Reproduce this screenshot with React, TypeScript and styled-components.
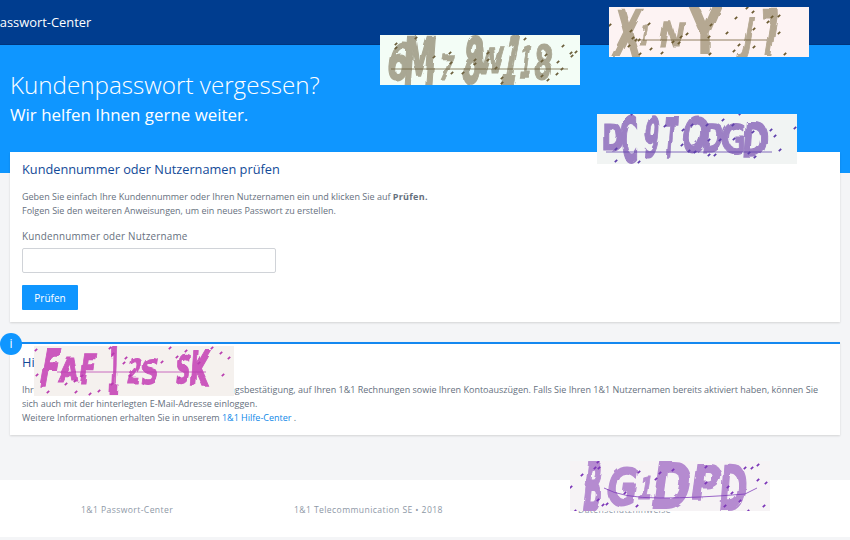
import React from "react";
import styled, { createGlobalStyle } from "styled-components";

const Global = createGlobalStyle`
  html, body { margin: 0; padding: 0; background: #f4f5f7; overflow: hidden; }
  body { font-family: "Open Sans", "Noto Sans", sans-serif; color: #5f6b7a; }
`;

const Page = styled.div`
  position: relative;
  width: 850px;
  height: 540px;
  overflow: hidden;
`;

const TopBar = styled.header`
  height: 44px;
  background: #003d8f;
  border-bottom: 1px solid #00357d;
  display: flex;
  align-items: center;
`;

const Brand = styled.div`
  margin-left: -8px;
  margin-top: -1px;
  color: #fff;
  font-size: 12.9px;
`;

const Hero = styled.section`
  height: 128px;
  background: #0f96ff;
  padding: 22px 10px 0;
  box-sizing: border-box;
  color: #fff;
`;

const HeroTitle = styled.h1`
  margin: 0;
  font-size: 24.2px;
  line-height: 36px;
  font-weight: 300;
`;

const HeroSub = styled.h2`
  margin: 0;
  font-size: 16.9px;
  line-height: 24px;
  font-weight: 400;
`;

const Main = styled.main`
  margin-top: -21px;
  padding: 0 10px;
  display: flex;
  flex-direction: column;
  gap: 20px;
`;

const Card = styled.section<{ $accent?: boolean }>`
  position: relative;
  background: #fff;
  padding: 8px 12px 0;
  box-sizing: border-box;
  height: ${(p) => (p.$accent ? "93px" : "170px")};
  border-top: ${(p) => (p.$accent ? "2px solid #1488f0" : "none")};
  box-shadow: 0 1px 2px rgba(0, 0, 0, 0.14);
`;

const CardTitle = styled.h3`
  margin: 0;
  font-size: 12.75px;
  line-height: 18px;
  font-weight: 400;
  color: #124a98;
`;

const Copy = styled.p`
  margin: 12px 0 0;
  font-size: 9px;
  line-height: 14px;
  color: #66707e;
  strong { font-weight: 700; letter-spacing: 0.3px; }
  a { color: #0f88e8; text-decoration: none; }
`;

const Label = styled.label`
  display: block;
  margin-top: 11px;
  font-size: 9.9px;
  line-height: 14px;
  letter-spacing: 0.2px;
  color: #66707e;
`;

const Input = styled.input`
  display: block;
  width: 254px;
  height: 25px;
  margin-top: 5px;
  box-sizing: border-box;
  background: #fff;
  border: 1px solid #d0d3d8;
  border-radius: 2px;
`;

const Submit = styled.button`
  display: block;
  width: 56px;
  height: 25px;
  margin-top: 12px;
  padding: 0;
  border: 0;
  border-radius: 1px;
  background: #0f96ff;
  color: #fff;
  font-family: inherit;
  font-size: 10px;
`;

const InfoBadge = styled.div`
  position: absolute;
  left: -10px;
  top: -11px;
  width: 22px;
  height: 22px;
  border-radius: 50%;
  background: #0f96ff;
  color: #fff;
  font-size: 12px;
  font-weight: 400;
  line-height: 22px;
  text-align: center;
`;

const InfoTitle = styled(CardTitle)`
  margin-top: 1px;
`;

const InfoCopy = styled(Copy)`
  margin-top: 12px;
`;

const Footer = styled.footer`
  margin-top: 45px;
  height: 57px;
  background: #fff;
  display: flex;
  align-items: center;
  padding-top: 2px;
  box-sizing: border-box;
  font-size: 8.6px;
  letter-spacing: 0.4px;
  color: #8e98a6;
`;

const FootItem = styled.span<{ $w: number }>`
  flex: none;
  width: ${(p) => p.$w}px;
  &:first-child { padding-left: 81px; box-sizing: border-box; }
`;

const CaptchaBox = styled.svg<{ $x: number; $y: number; $bg: string }>`
  position: absolute;
  left: ${(p) => p.$x}px;
  top: ${(p) => p.$y}px;
  width: 200px;
  height: 50px;
  background: ${(p) => p.$bg};
`;

// char, left, top, bottom, width, skew
type Glyph = [string, number, number, number, number, number];

interface CaptchaProps {
  id: string;
  x: number;
  y: number;
  bg: string;
  ink: string;
  dot: string;
  glyphs: Glyph[];
  line: string;
  dots: [number, number][];
}

const Captcha = ({ id, x, y, bg, ink, dot, glyphs, line, dots }: CaptchaProps) => (
  <CaptchaBox $x={x} $y={y} $bg={bg} viewBox="0 0 200 50">
    <defs>
      <filter id={id} x="-10%" y="-10%" width="120%" height="120%">
        <feTurbulence type="fractalNoise" baseFrequency="0.06" numOctaves="2" seed="4" result="n" />
        <feDisplacementMap in="SourceGraphic" in2="n" scale="5" />
        <feGaussianBlur stdDeviation="0.7" />
      </filter>
    </defs>
    <g filter={`url(#${id})`} fill={ink} stroke={ink} strokeWidth="1.2" fontFamily="'DejaVu Sans', sans-serif" fontWeight="700" fontSize="40" textAnchor="middle">
      {glyphs.map(([c, left, top, bottom, w, skew], i) => (
        <text
          key={i}
          transform={`translate(${left + w / 2} ${bottom}) skewX(${skew}) scale(${w / 28} ${(bottom - top) / 29})`}
        >
          {c}
        </text>
      ))}
    </g>
    <path d={line} fill="none" stroke={dot} strokeOpacity="0.75" strokeWidth="1" />
    <g stroke={dot} strokeWidth="1.7" strokeLinecap="butt">
      {dots.map(([dx, dy], i) => (
        <path key={i} d={`M${dx - 1.2} ${dy + 1.2}L${dx + 1.2} ${dy - 1.2}`} />
      ))}
    </g>
  </CaptchaBox>
);

const App = () => {
  return (
    <Page>
      <Global />
      <TopBar>
        <Brand>Passwort-Center</Brand>
      </TopBar>
      <Hero>
        <HeroTitle>Kundenpasswort vergessen?</HeroTitle>
        <HeroSub>Wir helfen Ihnen gerne weiter.</HeroSub>
      </Hero>
      <Main>
        <Card>
          <CardTitle>Kundennummer oder Nutzernamen prüfen</CardTitle>
          <Copy>
            Geben Sie einfach Ihre Kundennummer oder Ihren Nutzernamen ein und klicken Sie auf <strong>Prüfen.</strong>
            <br />
            Folgen Sie den weiteren Anweisungen, um ein neues Passwort zu erstellen.
          </Copy>
          <Label htmlFor="kunde">Kundennummer oder Nutzername</Label>
          <Input id="kunde" />
          <Submit>Prüfen</Submit>
        </Card>
        <Card $accent>
          <InfoBadge>i</InfoBadge>
          <InfoTitle>Hinweis</InfoTitle>
          <InfoCopy>
            Ihre Kundennummer finden Sie z. B. in Ihrer Auftragsbestätigung, auf Ihren 1&amp;1 Rechnungen sowie Ihren Kontoauszügen. Falls Sie Ihren 1&amp;1 Nutzernamen bereits aktiviert haben, können Sie sich auch mit der hinterlegten E-Mail-Adresse einloggen.
            <br />
            Weitere Informationen erhalten Sie in unserem <a href="#hilfe">1&amp;1 Hilfe-Center</a> .
          </InfoCopy>
        </Card>
      </Main>
      <Footer>
        <FootItem $w={294}>1&amp;1 Passwort-Center</FootItem>
        <FootItem $w={284}>1&amp;1 Telecommunication SE • 2018</FootItem>
        <FootItem $w={200}>Datenschutzhinweise</FootItem>
      </Footer>

      <Captcha
        id="c1" x={380} y={35} bg="#f3fdf6" ink="#a9a793" dot="#6b5f3c"
        glyphs={[["6", 5, 8, 44, 22, -8], ["M", 26, 2, 50, 24, -4], ["7", 58, 20, 45, 14, -10], ["8", 81, 2, 48, 19, -6], ["W", 99, 12, 38, 19, -6], ["1", 120, 0, 50, 15, -10], ["1", 137, 10, 42, 13, -8], ["8", 154, 10, 45, 18, -2]]}
        line="M11 34H188"
        dots={[[36, -1], [36, 3], [16, 9], [16, 13], [54, 22], [70, 18], [71, 28], [72, 38], [83, 38], [95, 25], [95, 29], [108, 18], [108, 25], [116, 33], [122, 43], [122, 48], [145, 4], [162, 26], [166, 20], [178, 27], [162, 41], [168, 45], [177, 39], [182, 34], [183, 11], [191, 18], [196, 17], [192, 21]]}
      />
      <Captcha
        id="c2" x={609} y={7} bg="#fdf3f3" ink="#b5a892" dot="#6b5a30"
        glyphs={[["X", 4, 3, 48, 25, -6], ["1", 29, 18, 38, 10, -10], ["N", 50, 15, 40, 22, -10], ["Y", 81, 0, 46, 30, 0], ["J", 127, 10, 45, 18, -10], ["7", 153, 2, 48, 19, 2]]}
        line="M30 33H158"
        dots={[[1, 18], [22, 24], [20, 39], [27, 33], [30, 33], [40, 17], [24, 31], [31, 47], [42, 42], [53, 46], [64, 35], [70, 36], [72, 30], [78, 27], [102, 18], [100, 30], [101, 47], [118, 26], [127, 11], [138, 1], [144, 5], [145, 22], [130, 38], [145, 40], [125, 44], [159, 15], [163, 10], [170, 9], [170, 26], [176, 47]]}
      />
      <Captcha
        id="c3" x={597} y={114} bg="#f1f4f3" ink="#9c80c4" dot="#5e3eab"
        glyphs={[["D", 6, 9, 36, 19, 0], ["C", 24, 3, 48, 17, 0], ["9", 45, 3, 43, 16, -6], ["T", 65, 3, 44, 14, -4], ["O", 85, 3, 38, 21, -8], ["D", 105, 9, 38, 19, -6], ["G", 126, 9, 39, 21, 0], ["D", 146, 8, 43, 22, -4]]}
        line="M9 38H175"
        dots={[[35, 0], [68, 12], [86, 16], [95, 11], [110, 11], [85, 31], [92, 37], [98, 38], [112, 41], [118, 41], [112, 26], [123, 26], [126, 6], [136, 11], [137, 25], [143, 0], [156, 18], [152, 39], [158, 43], [174, 16], [178, 22], [183, 36], [198, 14], [19, 47], [42, 48], [19, 35]]}
      />
      <Captcha
        id="c4" x={34} y={346} bg="#f5f1ee" ink="#cb58bd" dot="#b93db0"
        glyphs={[["F", 3, 3, 40, 20, -10], ["A", 24, 12, 35, 19, -8], ["F", 44, 8, 37, 17, -8], ["1", 74, 0, 48, 11, -2], ["2", 92, 12, 37, 13, -10], ["S", 105, 13, 38, 19, -8], ["S", 140, 8, 37, 15, -6], ["K", 156, 5, 40, 17, -4]]}
        line="M23 26H172"
        dots={[[3, 29], [2, 4], [14, 46], [32, 38], [41, 35], [48, 30], [42, 46], [56, 48], [65, 45], [78, 38], [76, 2], [79, 8], [92, 12], [90, 17], [96, 30], [128, 16], [136, 2], [143, 11], [152, 5], [145, 32], [165, 17], [178, 2], [187, 7], [195, 12], [189, 29]]}
      />
      <Captcha
        id="c5" x={570} y={461} bg="#f6f3f5" ink="#b58bd0" dot="#7b35b8"
        glyphs={[["B", 12, 1, 49, 17, -6], ["G", 37, 7, 44, 26, -8], ["1", 67, 15, 39, 15, -8], ["D", 82, 1, 47, 33, -8], ["P", 120, 4, 39, 27, -8], ["D", 150, 4, 49, 23, -4]]}
        line="M34 27Q52 37 90 37T175 33L187 27"
        dots={[[1, 26], [5, 50], [12, 14], [28, 1], [25, 7], [29, 7], [28, 39], [33, 44], [37, 43], [55, 32], [69, 11], [67, 45], [86, 18], [90, 12], [103, 9], [136, 6], [136, 22], [158, 26], [162, 32], [155, 45], [170, 40], [175, 7], [182, 7], [188, 4], [188, 19], [196, 22], [194, 45], [178, 50]]}
      />
    </Page>
  );
};

export default App;
